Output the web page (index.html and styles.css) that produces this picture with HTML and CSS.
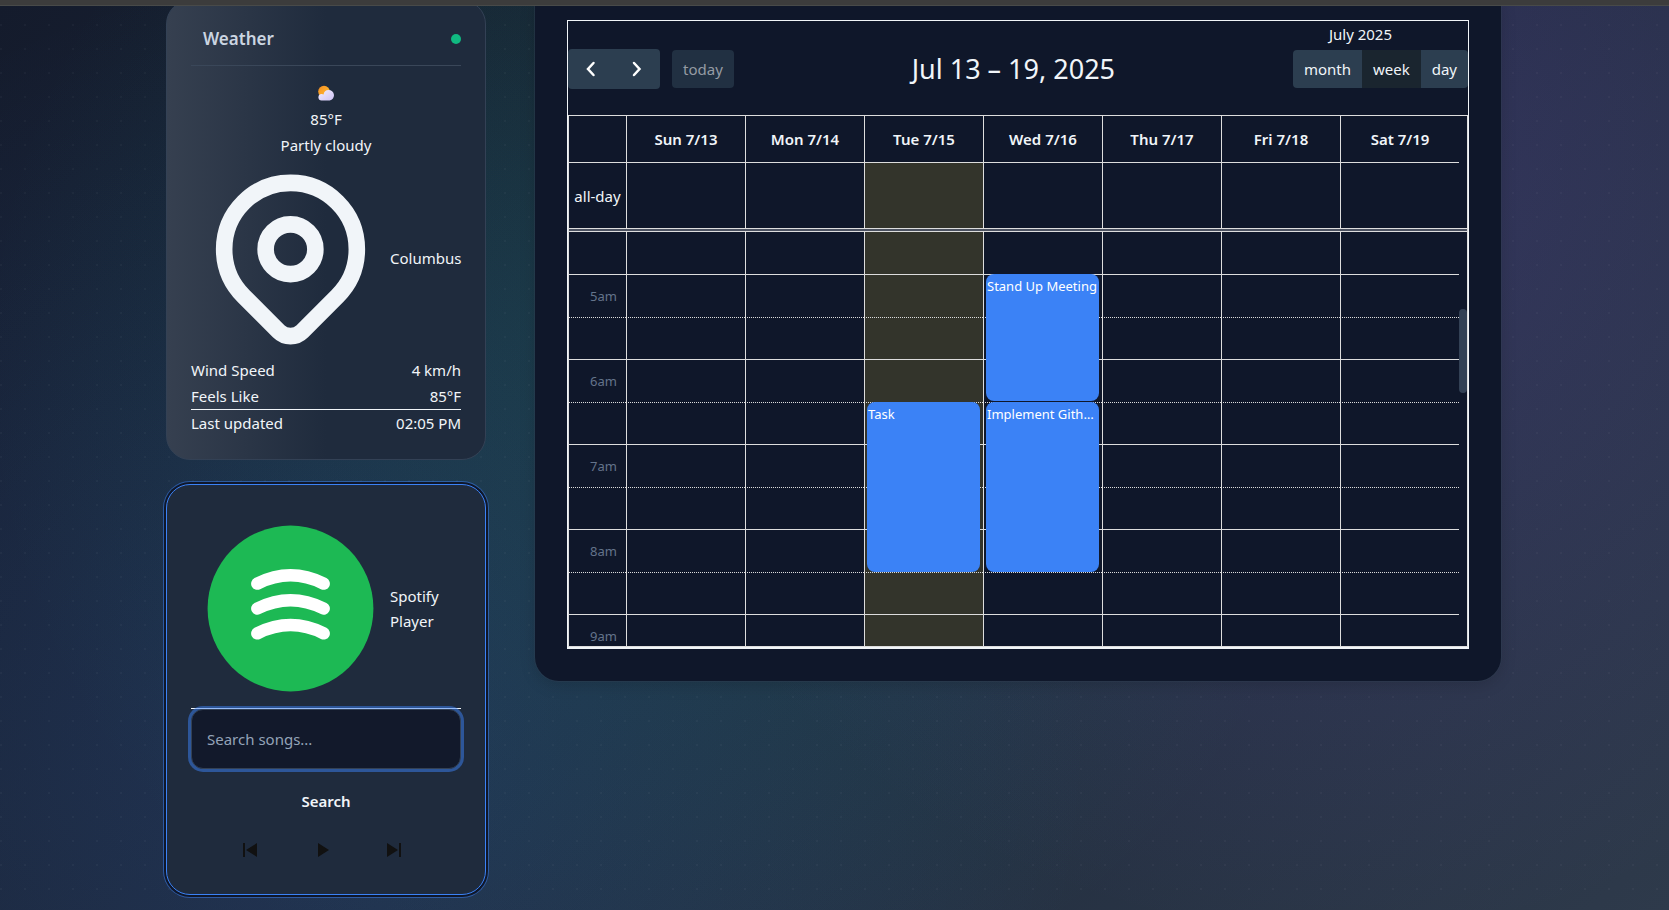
FILE: index.html
```html
<!DOCTYPE html>
<html lang="en">
<head>
<meta charset="utf-8">
<title>Dashboard</title>
<link rel="stylesheet" href="styles.css">
</head>
<body>
<div class="topbar"></div>
<main class="dashboard">
  <aside class="sidebar">
    <section class="card weather">
      <header class="card-header">
        <h2 class="card-title">Weather</h2>
        <span class="status-dot"></span>
      </header>
      <div class="conditions">
        <svg class="cloud" viewBox="0 0 16 16" aria-hidden="true">
          <defs>
            <linearGradient id="sun" x1="0" y1="0" x2="1" y2="1"><stop offset="0" stop-color="#f58a1f"/><stop offset="1" stop-color="#ffc83a"/></linearGradient>
            <linearGradient id="puff" x1="0" y1="0" x2="1" y2="1"><stop offset="0" stop-color="#f4eefe"/><stop offset="1" stop-color="#cdc2f5"/></linearGradient>
          </defs>
          <circle cx="6" cy="6.500" r="5.800" fill="url(#sun)"/>
          <path d="M3.500 15.500a3.300 3.300 0 0 1-.6-6.500c1-.3 2 0 2.700.5A5.200 5.200 0 0 1 10.500 5a5.300 5.300 0 0 1 1.200 10.500z" fill="url(#puff)"/>
        </svg>
        <p>85°F</p>
        <p>Partly cloudy</p>
      </div>
      <div class="icon-row">
        <svg viewBox="0 0 24 24" fill="none" stroke="#f1f5f9" stroke-width="2" stroke-linecap="round" stroke-linejoin="round" aria-hidden="true">
          <path d="M17.657 16.657L13.414 20.900a2 2 0 0 1-2.827 0l-4.244-4.243a8 8 0 1 1 11.314 0z"/>
          <circle cx="12" cy="11" r="3"/>
        </svg>
        <span>Columbus</span>
      </div>
      <div class="stat"><span>Wind Speed</span><span>4 km/h</span></div>
      <div class="stat"><span>Feels Like</span><span>85°F</span></div>
      <div class="stat updated"><span>Last updated</span><span>02:05 PM</span></div>
    </section>

    <section class="card player">
      <div class="icon-row">
        <svg viewBox="0 0 24 24" fill="none" aria-hidden="true">
          <circle cx="12" cy="12" r="10" fill="#1db954"/>
          <path d="M8 9Q12 7 16 9M8 12Q12 10 16 12M8 15Q12 13 16 15" stroke="#fff" stroke-width="1.500" stroke-linecap="round"/>
        </svg>
        <span>Spotify Player</span>
      </div>
      <form class="search">
        <input class="search-input" type="text" placeholder="Search songs..." aria-label="Search songs">
        <button class="search-button" type="button">Search</button>
      </form>
      <div class="controls">
        <button class="control" type="button" aria-label="Previous"><svg viewBox="0 0 24 24"><path d="M5 5h2v14H5zM19 5v14L8 12z"/></svg></button>
        <button class="control" type="button" aria-label="Play"><svg viewBox="0 0 24 24"><path d="M8 5v14l11-7z"/></svg></button>
        <button class="control" type="button" aria-label="Next"><svg viewBox="0 0 24 24"><path d="M17 5h2v14h-2zM5 5v14l11-7z"/></svg></button>
      </div>
    </section>
  </aside>

  <section class="calendar-card">
    <div class="calendar">
      <p class="month-label">July 2025</p>
      <div class="toolbar">
        <div class="tool-left">
          <div class="group">
            <button class="btn nav" type="button" aria-label="Previous week"><svg viewBox="0 0 16 16"><path d="M10.500 2L5 8l5.500 6"/></svg></button>
            <button class="btn nav" type="button" aria-label="Next week"><svg viewBox="0 0 16 16"><path d="M5 2l5.500 6L5 14"/></svg></button>
          </div>
          <button class="btn today-btn" type="button" disabled>today</button>
        </div>
        <h2 class="range">Jul 13 – 19, 2025</h2>
        <div class="group">
          <button class="btn" type="button">month</button>
          <button class="btn active" type="button">week</button>
          <button class="btn" type="button">day</button>
        </div>
      </div>

      <div class="grid">
        <div class="gutter">
          <table class="week">
            <colgroup><col class="axis"><col span="7"></colgroup>
            <thead>
              <tr><th></th><th>Sun 7/13</th><th>Mon 7/14</th><th>Tue 7/15</th><th>Wed 7/16</th><th>Thu 7/17</th><th>Fri 7/18</th><th>Sat 7/19</th></tr>
            </thead>
            <tbody>
              <tr class="all-day"><td>all-day</td><td></td><td></td><td class="today"></td><td></td><td></td><td></td><td></td></tr>
            </tbody>
          </table>
        </div>
        <div class="divider"></div>
        <div class="scroller">
          <table class="week slots">
            <colgroup><col class="axis"><col span="7"></colgroup>
            <tbody>
              <tr class="first"><td></td><td></td><td></td><td class="today"></td><td></td><td></td><td></td><td></td></tr>
              <tr class="hour"><td>5am</td><td></td><td></td><td class="today"></td><td><div class="event short">Stand Up Meeting</div></td><td></td><td></td><td></td></tr>
              <tr class="half"><td></td><td></td><td></td><td class="today"></td><td></td><td></td><td></td><td></td></tr>
              <tr class="hour"><td>6am</td><td></td><td></td><td class="today"></td><td></td><td></td><td></td><td></td></tr>
              <tr class="half"><td></td><td></td><td></td><td class="today"><div class="event">Task</div></td><td><div class="event">Implement Github API</div></td><td></td><td></td><td></td></tr>
              <tr class="hour"><td>7am</td><td></td><td></td><td class="today"></td><td></td><td></td><td></td><td></td></tr>
              <tr class="half"><td></td><td></td><td></td><td class="today"></td><td></td><td></td><td></td><td></td></tr>
              <tr class="hour"><td>8am</td><td></td><td></td><td class="today"></td><td></td><td></td><td></td><td></td></tr>
              <tr class="half"><td></td><td></td><td></td><td class="today"></td><td></td><td></td><td></td><td></td></tr>
              <tr class="hour"><td>9am</td><td></td><td></td><td class="today"></td><td></td><td></td><td></td><td></td></tr>
            </tbody>
          </table>
          <div class="thumb"></div>
        </div>
      </div>
    </div>
  </section>
</main>
</body>
</html>
```
FILE: styles.css
```css
* { box-sizing: border-box; }

body {
  margin: 0;
  min-height: 100vh;
  overflow: hidden;
  color: #f1f5f9;
  font: 15px/26px "Noto Sans", "Open Sans", sans-serif;
  background:
    radial-gradient(circle at 1px 1px, rgba(255, 255, 255, 0.03) 1px, transparent 1px) 0 0 / 24px 24px,
    radial-gradient(circle at 20% 80%, rgba(59, 130, 246, 0.15) 0%, transparent 50%),
    radial-gradient(circle at 80% 20%, rgba(139, 92, 246, 0.17) 0%, transparent 50%),
    radial-gradient(circle at 40% 40%, rgba(16, 185, 129, 0.14) 0%, transparent 60%),
    linear-gradient(135deg, #141b2c 0%, #1e293b 50%, #2e3a4b 100%);
}

h2, p { margin: 0; font-weight: inherit; }
button, input { font: inherit; color: inherit; margin: 0; }
button { border: 0; background: none; padding: 0; }

.topbar {
  position: fixed;
  inset: 0 0 auto;
  height: 6px;
  background: #3c3c3c;
  border-bottom: 1px solid #484a49;
  z-index: 5;
}

.dashboard {
  display: grid;
  grid-template-columns: 320px 1fr;
  gap: 49px;
  align-items: start;
  margin: 0 168px 0 166px;
}

.sidebar { display: grid; gap: 24px; }

.card {
  padding: 24px;
  border: 1px solid #334155;
  border-radius: 24px;
  background: #1f2b3d;
}

.weather {
  padding-bottom: 23px;
  background: linear-gradient(90deg, #364050, #1f2b3d 50%);
}

.card-header {
  display: flex;
  align-items: center;
  justify-content: space-between;
  padding: 0 0 12px 12px;
  margin-bottom: 19px;
  border-bottom: 1px solid #3a4759;
}

.card-title { font-size: 17px; line-height: 28px; font-weight: 600; color: #cbd5e1; }
.status-dot { width: 10px; height: 10px; border-radius: 50%; background: #10b981; }

.conditions { text-align: center; }
.cloud { display: block; width: 16px; height: 16px; margin: 5px auto; }

.icon-row {
  display: grid;
  grid-template-columns: 1fr 71px;
  align-items: center;
}
.icon-row svg { display: block; width: 100%; }

.stat { display: flex; justify-content: space-between; }
.updated { border-top: 1px solid #f1f5f9; }

.player {
  border-color: #3b82f6;
  box-shadow: 0 0 0 2px #0f172a, 0 0 0 3px rgba(59, 130, 246, 0.5);
}
.player .icon-row { line-height: 25px; }

.search {
  display: grid;
  border-top: 1px solid #f1f5f9;
}
.search-input {
  width: 100%;
  height: 60px;
  padding: 0 15px;
  border: 1px solid #334155;
  border-radius: 12px;
  background: #12192b;
  box-shadow: 0 0 0 3px rgba(59, 130, 246, 0.5);
  outline: 0;
}
.search-input::placeholder { color: #94a3b8; opacity: 1; }
.search-button { height: 40px; margin: 12px 0 8px; font-weight: 600; }

.controls {
  display: flex;
  justify-content: center;
  gap: 24px;
  padding-right: 8px;
}
.control { display: grid; place-items: center; width: 48px; height: 41px; }
.control svg { width: 24px; fill: #111; }

.calendar-card {
  padding: 20px 32px 32px;
  border-radius: 0 0 24px 24px;
  background: #0f172a;
  box-shadow: 0 0 0 1px rgba(51, 65, 85, 0.4), 0 4px 16px rgba(0, 0, 0, 0.15);
}
.calendar { border: 1px solid #f1f5f9; border-bottom-width: 2px; }
.month-label { padding: 0 76px 2px 0; text-align: right; }

.toolbar {
  display: flex;
  justify-content: space-between;
  align-items: center;
  height: 40px;
  margin-bottom: 26px;
}
.tool-left, .group { display: flex; align-items: center; }
.tool-left { gap: 12px; }
.range { font-size: 27px; line-height: 40px; }

.btn { height: 38px; padding: 0 11px; background: #2c3e50; }
.btn:first-child { border-radius: 4px 0 0 4px; }
.btn:last-child { border-radius: 0 4px 4px 0; }
.btn.active { background: #1a252f; }
.nav { display: grid; place-items: center; width: 46px; height: 40px; }
.nav svg { width: 16px; fill: none; stroke: #fff; stroke-width: 2.500; stroke-linecap: round; }
.btn.today-btn { border-radius: 4px; background: #213042; color: #959ba4; }

.grid { border: 1px solid #ddd; }
.gutter { padding-right: 8px; }

.week {
  width: 100%;
  table-layout: fixed;
  border-spacing: 0;
}
.axis { width: 57px; }
.week th, .week td { padding: 0; border-left: 1px solid #ddd; }
.week th:first-child, .week td:first-child { border-left: 0; }
.week th { height: 46px; font-weight: 600; }
.all-day td { height: 66px; border-top: 1px solid #ddd; text-align: center; }
.today { background: #33342b; }

.divider { height: 4px; border: 1px solid #ddd; border-width: 1px 0; background: #4b5160; }

.scroller { position: relative; height: 414px; overflow: hidden; padding-right: 8px; }
.slots td { position: relative; height: 43px; border-top: 1px solid #ddd; }
.slots td:first-child { padding-right: 9px; text-align: right; color: #64748b; font-size: 13px; }
.slots .first td { height: 42px; border-top: 0; }
.slots .half td { height: 42px; border-top-style: dotted; }

.event {
  position: absolute;
  top: -1px;
  left: 2px;
  right: 3px;
  z-index: 1;
  height: 170px;
  padding: 1px 0 1px 1px;
  border-radius: 8px;
  background: #3b82f6;
  color: #fff;
  font-size: 13px;
  line-height: 23px;
  white-space: nowrap;
  overflow: hidden;
  text-overflow: ellipsis;
}
.event.short { height: 127px; }

.thumb {
  position: absolute;
  top: 77px;
  right: 0;
  width: 8px;
  height: 84px;
  border-radius: 4px;
  background: #334155;
}
```
